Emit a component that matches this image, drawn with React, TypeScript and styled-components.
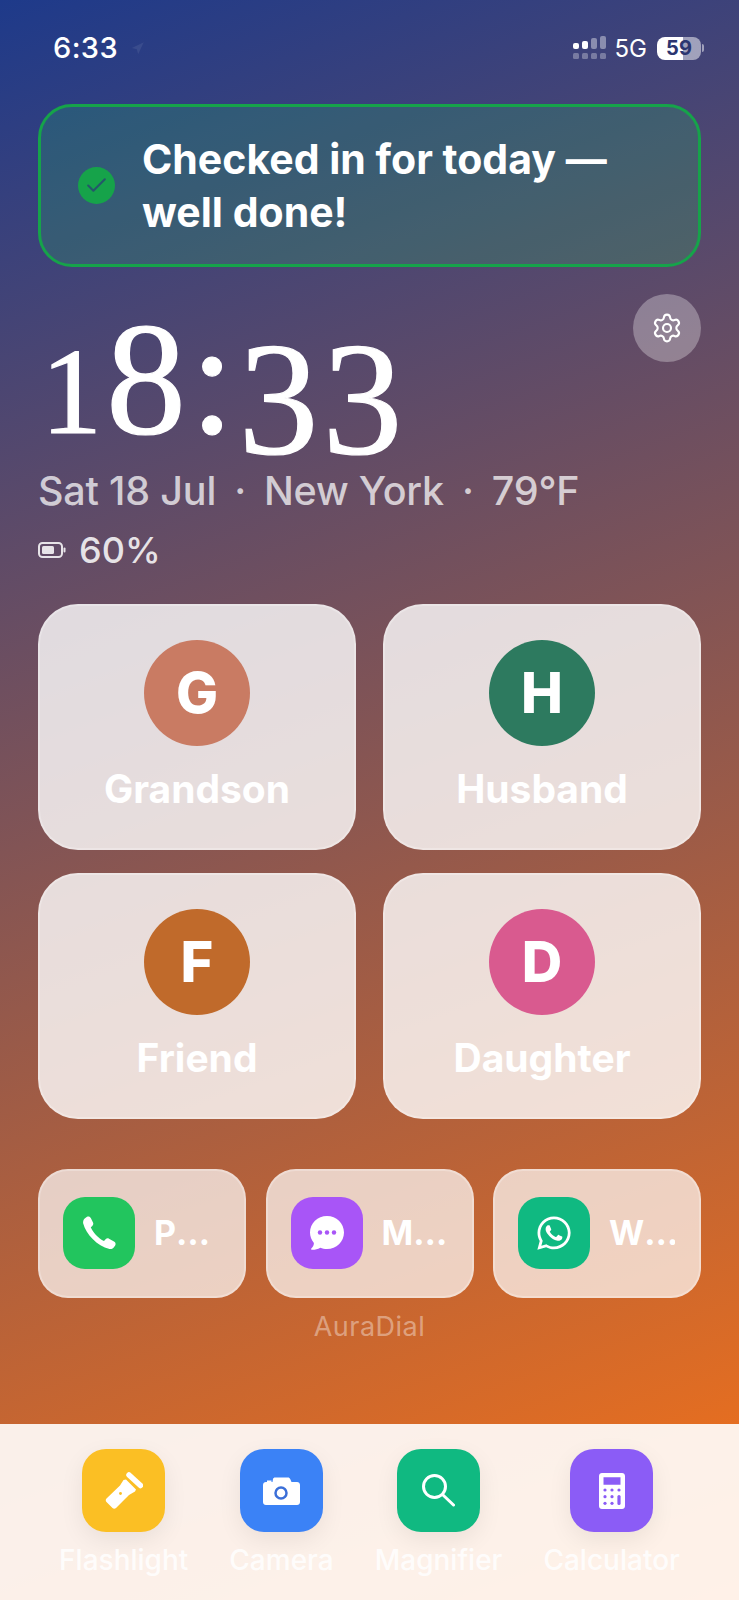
import { FC, ReactNode } from 'react'
import styled, { createGlobalStyle } from 'styled-components'
import { Check, Settings, Navigation } from 'lucide-react'
import { FaWhatsapp } from 'react-icons/fa'

const GlobalStyle = createGlobalStyle`
  * { box-sizing: border-box; }
  html, body { margin: 0; padding: 0; }
  body { font-family: Inter, 'Noto Sans', sans-serif; background: #fdf1e8; }
`

const Screen = styled.div`
  width: 739px;
  height: 1600px;
  display: flex;
  flex-direction: column;
  overflow: hidden;
  background: linear-gradient(160deg, #1e3a8a 0%, #f97316 100%);
`

const Main = styled.main`
  flex: 0 0 1424px;
  padding: 0 38px;
  display: flex;
  flex-direction: column;
  color: #fff;
`

const StatusBar = styled.div`
  height: 104px;
  padding: 31px 0 0 15px;
  display: flex;
  align-items: flex-start;
  justify-content: space-between;
`

const StatusTime = styled.div`
  display: flex;
  align-items: center;
  gap: 12px;
  font-size: 29px;
  line-height: 34px;
  font-weight: 500;
  letter-spacing: .4px;
`

const StatusRight = styled.div`
  display: flex;
  align-items: center;
  height: 34px;
  margin-right: -3px;
`

const Carrier = styled.span`
  font-size: 24px;
  font-weight: 400;
  margin: 0 10px 0 9px;
`

const BatteryPill = styled.div`
  width: 44px;
  height: 23px;
  border-radius: 8px;
  display: flex;
  align-items: center;
  justify-content: center;
  font-size: 20px;
  font-weight: 700;
  color: #2b3570;
  background: linear-gradient(90deg, #fff 0 59%, rgba(255, 255, 255, .5) 59% 100%);
`

const BatteryNub = styled.span`
  width: 2px;
  height: 8px;
  margin-left: 1px;
  border-radius: 0 2px 2px 0;
  background: rgba(255, 255, 255, .5);
`

const Banner = styled.div`
  height: 163px;
  border: 3px solid #16a34a;
  border-radius: 34px;
  padding: 0 37px;
  display: flex;
  align-items: center;
  gap: 27px;
  background: rgba(34, 197, 94, .2);
`

const CheckDot = styled.span`
  flex: 0 0 37px;
  height: 37px;
  border-radius: 50%;
  background: #16a34a;
  display: flex;
  align-items: center;
  justify-content: center;
  color: #24586a;
`

const BannerText = styled.div`
  font-size: 41px;
  line-height: 53px;
  font-weight: 700;
  max-width: 520px;
`

const ClockRow = styled.div`
  margin-top: 27px;
  height: 171px;
  display: flex;
  justify-content: space-between;
  align-items: flex-start;
`

const Clock = styled.div`
  margin-top: 5px;
  font-family: 'Liberation Serif', 'Times New Roman', serif;
  font-size: 160px;
  line-height: 160px;
  letter-spacing: 4px;
  white-space: nowrap;
  -webkit-text-stroke: 1.2px #fff;
`

const OldOne = styled.span`
  font-size: 122px;
  margin-left: 3px;
`

const Drop = styled.span`
  display: inline-block;
  vertical-align: -20px;
`

const GearButton = styled.button`
  width: 68px;
  height: 68px;
  padding: 0;
  border: 0;
  border-radius: 50%;
  display: flex;
  align-items: center;
  justify-content: center;
  color: #fff;
  background: rgba(255, 255, 255, .3);
`

const DateLine = styled.div`
  margin-top: 3px;
  display: flex;
  gap: 18px;
  font-size: 39.5px;
  line-height: 46px;
  font-weight: 500;
  letter-spacing: -.2px;
  white-space: nowrap;
  color: rgba(255, 255, 255, .72);
`

const PowerLine = styled.div`
  margin-top: 15px;
  display: flex;
  align-items: center;
  gap: 13px;
  font-size: 36px;
  line-height: 42px;
  font-weight: 500;
  color: rgba(255, 255, 255, .85);
`

const ContactGrid = styled.div`
  margin-top: 33px;
  display: grid;
  grid-template-columns: 318px 318px;
  grid-auto-rows: 246px;
  column-gap: 27px;
  row-gap: 23px;
`

const ContactCard = styled.div`
  border: 2px solid rgba(255, 255, 255, .25);
  border-radius: 40px;
  background: rgba(255, 255, 255, .8);
  padding-top: 34px;
  display: flex;
  flex-direction: column;
  align-items: center;
  gap: 20px;
`

const Avatar = styled.div<{ $bg: string }>`
  width: 106px;
  height: 106px;
  border-radius: 50%;
  background: ${({ $bg }) => $bg};
  display: flex;
  align-items: center;
  justify-content: center;
  font-size: 56px;
  font-weight: 800;
`

const ContactName = styled.div`
  font-size: 39px;
  line-height: 46px;
  font-weight: 700;
`

const AppRow = styled.div`
  margin-top: 50px;
  display: grid;
  grid-template-columns: repeat(3, 208px);
  column-gap: 19.5px;
`

const AppCard = styled.div`
  height: 129px;
  border: 2px solid rgba(255, 255, 255, .25);
  border-radius: 30px;
  background: rgba(255, 255, 255, .7);
  padding: 0 24px 1px 23px;
  display: flex;
  align-items: center;
  gap: 19px;
`

const AppIcon = styled.div<{ $bg: string }>`
  flex: 0 0 72px;
  height: 72px;
  border-radius: 22px;
  background: ${({ $bg }) => $bg};
  display: flex;
  align-items: center;
  justify-content: center;
  color: #fff;
`

const AppName = styled.div`
  min-width: 0;
  font-size: 34px;
  line-height: 42px;
  font-weight: 700;
  white-space: nowrap;
  overflow: hidden;
  text-overflow: ellipsis;
`

const Brand = styled.div`
  margin-top: 13px;
  text-align: center;
  font-size: 27px;
  line-height: 32px;
  letter-spacing: .5px;
  color: rgba(255, 255, 255, .4);
`

const Dock = styled.nav`
  flex: 1;
  padding-top: 25px;
  display: flex;
  justify-content: center;
  gap: 41px;
  background: rgba(255, 255, 255, .9);
`

const DockItem = styled.div`
  display: flex;
  flex-direction: column;
  align-items: center;
  gap: 10px;
`

const DockIcon = styled.div<{ $bg: string }>`
  width: 83px;
  height: 83px;
  border-radius: 24px;
  background: ${({ $bg }) => $bg};
  box-shadow: 0 8px 24px rgba(0, 0, 0, .07);
  display: flex;
  align-items: center;
  justify-content: center;
  color: #fff;
`

const DockLabel = styled.div`
  font-size: 28px;
  line-height: 36px;
  font-weight: 500;
  color: rgba(255, 255, 255, .85);
`

const SignalIcon: FC = () => (
  <svg width="33" height="24" viewBox="0 0 33 24" fill="#fff">
    <rect x="0" y="7" width="6" height="6" rx="2" />
    <rect x="9" y="5" width="6" height="8" rx="2" />
    <rect x="18" y="2" width="6" height="11" rx="2" opacity=".4" />
    <rect x="27" y="0" width="6" height="13" rx="2" opacity=".4" />
    <g opacity=".3">
      <rect x="0" y="17" width="6" height="6" rx="1.5" />
      <rect x="9" y="17" width="6" height="6" rx="1.5" />
      <rect x="18" y="17" width="6" height="6" rx="1.5" />
      <rect x="27" y="17" width="6" height="6" rx="1.5" />
    </g>
  </svg>
)

const SmallBattery: FC = () => (
  <svg width="28" height="16" viewBox="0 0 28 16" fill="none">
    <rect x="1" y="1" width="23" height="14" rx="3.5" stroke="#fff" strokeOpacity=".85" strokeWidth="2" />
    <rect x="4" y="4" width="12" height="8" rx="1.5" fill="#fff" fillOpacity=".85" />
    <rect x="25.5" y="5.5" width="2" height="5" rx="1" fill="#fff" fillOpacity=".85" />
  </svg>
)

const PhoneIcon: FC = () => (
  <svg width="33" height="34" viewBox="0 0 33 34" fill="#fff">
    <path d="M4 .8C5.500 0 7 .5 7.800 2L10 6.500c.6 1.300.3 2.500-.7 3.400L7.800 11.200C9.500 16 15.500 22.500 21 25l1.600-1.700c.9-1 2.200-1.200 3.400-.6l5 2.800c1.500.9 2 2.500 1.200 3.900l-1.700 2.400c-1 1.200-2.500 1.500-4 1.200C14 30 3 18 .2 7.500-.2 5.500.5 3.500 2 2.300z" />
  </svg>
)

const MessageIcon: FC = () => (
  <svg width="34" height="34" viewBox="0 0 34 34">
    <path fill="#fff" d="M17 0c9.400 0 17 7.400 17 16.500S26.400 33 17 33c-2.400 0-4.700-.5-6.700-1.300-2.800 1.500-5.800 2.300-8.500 2.100-.8-.1-1-.8-.5-1.300 1.700-1.500 2.600-3.700 2.600-5.600C1.400 24 0 20.400 0 16.500 0 7.400 7.600 0 17 0z" />
    <g fill="#a855f7">
      <circle cx="10" cy="16.500" r="2.200" />
      <circle cx="17" cy="16.500" r="2.200" />
      <circle cx="24" cy="16.500" r="2.200" />
    </g>
  </svg>
)

const FlashlightIcon: FC = () => (
  <svg width="38" height="37" viewBox="0 0 38 37" fill="#fff">
    <line x1="24" y1="3" x2="35.500" y2="13.500" stroke="#fff" strokeWidth="5.500" strokeLinecap="round" />
    <path d="M21 7.500l10 10-1 2-6 3.500-13 13c-1 1-2.500 1-3.500 0l-6-6c-1-1-1-2.500 0-3.500l13.500-13 3.500-5.500z" />
    <circle cx="15.500" cy="21.500" r="1.400" fill="#fbbf24" />
  </svg>
)

const CameraIcon: FC = () => (
  <svg width="37" height="28" viewBox="0 0 37 28">
    <path fill="#fff" d="M12 .5h13c1 0 1.800.6 2.200 1.500L28.500 5H34c1.700 0 3 1.300 3 3v17c0 1.700-1.300 3-3 3H3c-1.700 0-3-1.300-3-3V8c0-1.700 1.300-3 3-3h1V3.500h4.500V5h1L10 2c.4-1 1-1.500 2-1.500z" />
    <circle cx="18" cy="16" r="5.500" fill="none" stroke="#3b6fd8" strokeWidth="2.500" />
  </svg>
)

const MagnifierIcon: FC = () => (
  <svg width="33" height="33" viewBox="0 0 33 33" fill="none" stroke="#fff" strokeWidth="3" strokeLinecap="round">
    <circle cx="12.500" cy="12.500" r="11" />
    <line x1="21" y1="21" x2="31.500" y2="31" />
  </svg>
)

const CalculatorIcon: FC = () => (
  <svg width="26" height="36" viewBox="0 0 26 36" fill="#fff">
    <path fillRule="evenodd" d="M3 0h20c1.700 0 3 1.300 3 3v30c0 1.700-1.300 3-3 3H3c-1.700 0-3-1.300-3-3V3c0-1.700 1.300-3 3-3zm1.500 4.300v7.400h17V4.300z" />
    <g fill="#8b5cf6">
      <circle cx="6" cy="17" r="1.600" />
      <circle cx="13" cy="17" r="1.600" />
      <circle cx="20" cy="17" r="1.600" />
      <circle cx="6" cy="23.700" r="1.600" />
      <circle cx="13" cy="23.700" r="1.600" />
      <circle cx="6" cy="30.300" r="1.600" />
      <circle cx="13" cy="30.300" r="1.600" />
      <rect x="18.400" y="22" width="3.200" height="10" rx="1.600" />
    </g>
  </svg>
)

type Contact = { initial: string; name: string; bg: string }
type Tool = { label: string; bg: string; icon: ReactNode }

const contacts: Contact[] = [
  { initial: 'G', name: 'Grandson', bg: '#c97b63' },
  { initial: 'H', name: 'Husband', bg: '#2d7a5f' },
  { initial: 'F', name: 'Friend', bg: '#c06a2b' },
  { initial: 'D', name: 'Daughter', bg: '#d95a8f' },
]

const apps: { name: string; bg: string; icon: ReactNode }[] = [
  { name: 'Phone', bg: '#22c55e', icon: <PhoneIcon /> },
  { name: 'Messages', bg: '#a855f7', icon: <MessageIcon /> },
  { name: 'WhatsApp', bg: '#10b981', icon: <FaWhatsapp size={38} /> },
]

const tools: Tool[] = [
  { label: 'Flashlight', bg: '#fbbf24', icon: <FlashlightIcon /> },
  { label: 'Camera', bg: '#3b82f6', icon: <CameraIcon /> },
  { label: 'Magnifier', bg: '#10b981', icon: <MagnifierIcon /> },
  { label: 'Calculator', bg: '#8b5cf6', icon: <CalculatorIcon /> },
]

const App: FC = () => (
  <Screen>
    <GlobalStyle />
    <Main>
      <StatusBar>
        <StatusTime>
          6:33
          <Navigation size={15} fill="rgba(255,255,255,.08)" stroke="none" />
        </StatusTime>
        <StatusRight>
          <SignalIcon />
          <Carrier>5G</Carrier>
          <BatteryPill>59</BatteryPill>
          <BatteryNub />
        </StatusRight>
      </StatusBar>

      <Banner>
        <CheckDot><Check size={25} strokeWidth={2} /></CheckDot>
        <BannerText>Checked in for today — well done!</BannerText>
      </Banner>

      <ClockRow>
        <Clock><OldOne>1</OldOne>8:<Drop>33</Drop></Clock>
        <GearButton aria-label="Settings"><Settings size={32} strokeWidth={1.6} /></GearButton>
      </ClockRow>

      <DateLine>
        <span>Sat 18 Jul</span><span>·</span><span>New York</span><span>·</span><span>79°F</span>
      </DateLine>
      <PowerLine><SmallBattery />60%</PowerLine>

      <ContactGrid>
        {contacts.map((c) => (
          <ContactCard key={c.name}>
            <Avatar $bg={c.bg}>{c.initial}</Avatar>
            <ContactName>{c.name}</ContactName>
          </ContactCard>
        ))}
      </ContactGrid>

      <AppRow>
        {apps.map((a) => (
          <AppCard key={a.name}>
            <AppIcon $bg={a.bg}>{a.icon}</AppIcon>
            <AppName>{a.name}</AppName>
          </AppCard>
        ))}
      </AppRow>

      <Brand>AuraDial</Brand>
    </Main>

    <Dock>
      {tools.map((t) => (
        <DockItem key={t.label}>
          <DockIcon $bg={t.bg}>{t.icon}</DockIcon>
          <DockLabel>{t.label}</DockLabel>
        </DockItem>
      ))}
    </Dock>
  </Screen>
)

export default App
